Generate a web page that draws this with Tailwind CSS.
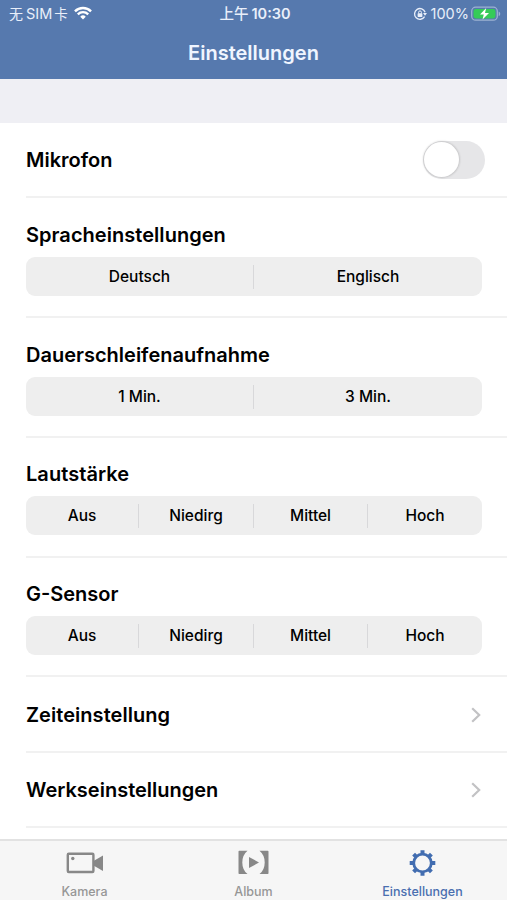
<!DOCTYPE html>
<html lang="de">
<head>
  <meta charset="UTF-8">
  <title>Einstellungen</title>
  <script src="https://cdn.jsdelivr.net/npm/@tailwindcss/browser@4"></script>
</head>
<body class="bg-white">
<div class="w-[507px] h-[900px] flex flex-col overflow-hidden bg-white text-black font-['Inter','Noto_Sans_CJK_SC',sans-serif]">

  <!-- Header -->
  <header class="h-[79px] shrink-0 bg-[#5679ae] text-white">
    <div class="h-7 grid grid-cols-3 items-center pl-[9px] pr-[6px] text-[15px] leading-7 text-[#e9effa]">
      <div class="flex items-center whitespace-nowrap">
        <span class="text-[14px]">无</span>
        <span class="ml-[3px] text-[14.5px]">SIM</span>
        <span class="ml-[2px] text-[13.5px]">卡</span>
        <svg class="ml-[6px] mb-[2px]" width="18" height="14" viewBox="0 0 19 14" fill="none" stroke="#fff" stroke-width="2.5">
          <path d="M1 5.2A12 12 0 0 1 18 5.2"/>
          <path d="M4 8.4A7.8 7.8 0 0 1 15 8.4"/>
          <path d="M9.5 13.8L6.6 10.9A4.1 4.1 0 0 1 12.4 10.9Z" fill="#fff" stroke="none"/>
        </svg>
      </div>
      <div class="text-center font-semibold text-[14.5px] whitespace-nowrap"><span class="font-medium">上午</span><span class="ml-[3px]">10:30</span></div>
      <div class="flex items-center justify-end whitespace-nowrap">
        <svg width="14" height="14" viewBox="0 0 14 14" fill="none" stroke="#e9effa" stroke-width="1.3">
          <path d="M11.6 9.7A5.4 5.4 0 1 1 12.1 5.2"/>
          <path d="M10 6h4l-2 2.8z" fill="#e9effa" stroke="none"/>
          <rect x="4.6" y="6.3" width="4.8" height="3.6" rx=".6" fill="#e9effa" stroke="none"/>
          <path d="M5.6 6.5V5.3a1.4 1.4 0 0 1 2.8 0v1.2" stroke-width="1"/>
        </svg>
        <span class="ml-[4px] text-[14.5px]">100%</span>
        <svg class="ml-[2px]" width="30" height="16" viewBox="0 0 30 16">
          <rect x=".7" y="1.2" width="25.6" height="13" rx="4" fill="none" stroke="#9db2d2" stroke-width="1.3"/>
          <rect x="2.5" y="3" width="22" height="9.4" rx="2.4" fill="#35cb58"/>
          <path d="M27.7 5.4v4.6c2-.8 2-3.8 0-4.6z" fill="#9db2d2"/>
          <path d="M15.2 2L9 8.5h3.8L11.5 13.5 18 7h-4z" fill="#fff"/>
        </svg>
      </div>
    </div>
    <h1 class="h-[49px] text-center text-[20px] leading-[50px] font-semibold text-[#f0f5ff]">Einstellungen</h1>
  </header>

  <div class="h-11 shrink-0 bg-[#efeff4]"></div>

  <!-- Settings list -->
  <main class="flex-1 min-h-0 overflow-hidden pl-[26px] text-[20px] font-semibold">
    <div class="h-[75px] border-b-2 border-[#f1f1f1] flex items-center justify-between pr-[22px]">
      <span>Mikrofon</span>
      <div class="w-[62px] h-[38px] rounded-full bg-[#e6e6e8] py-[1.5px] px-px">
        <div class="size-[35px] rounded-full bg-white shadow-[0_0_2px_1px_rgba(0,0,0,0.14)]"></div>
      </div>
    </div>

    <div class="h-[120px] border-b-2 border-[#f1f1f1] pt-[22px]">
      <h2 class="leading-[30px] tracking-[0.04px]">Spracheinstellungen</h2>
      <div class="mt-[7px] mr-[25px] h-[39px] rounded-[9px] bg-[#eeeeee] flex items-center text-[15.5px] leading-[23px] font-medium text-center">
        <div class="w-[227px]">Deutsch</div>
        <div class="w-px h-6 bg-[#d8d8da]"></div>
        <div class="flex-1">Englisch</div>
      </div>
    </div>

    <div class="h-[120px] border-b-2 border-[#f1f1f1] pt-[22px]">
      <h2 class="leading-[30px]">Dauerschleifenaufnahme</h2>
      <div class="mt-[7px] mr-[25px] h-[39px] rounded-[9px] bg-[#eeeeee] flex items-center text-[15.5px] leading-[23px] font-medium text-center">
        <div class="w-[227px]">1 Min.</div>
        <div class="w-px h-6 bg-[#d8d8da]"></div>
        <div class="flex-1">3 Min.</div>
      </div>
    </div>

    <div class="h-[119.5px] border-b-2 border-[#f1f1f1] pt-[21px]">
      <h2 class="leading-[30px] tracking-[0.05px]">Lautstärke</h2>
      <div class="mt-[7px] mr-[25px] h-[39px] rounded-[9px] bg-[#eeeeee] flex items-center text-[15.5px] leading-[23px] font-medium text-center">
        <div class="w-[112px]">Aus</div>
        <div class="w-px h-6 bg-[#d8d8da]"></div>
        <div class="w-[114px]">Niedirg</div>
        <div class="w-px h-6 bg-[#d8d8da]"></div>
        <div class="w-[113px]">Mittel</div>
        <div class="w-px h-6 bg-[#d8d8da]"></div>
        <div class="flex-1">Hoch</div>
      </div>
    </div>

    <div class="h-[119.5px] border-b-2 border-[#f1f1f1] pt-[21.5px]">
      <h2 class="leading-[30px]">G-Sensor</h2>
      <div class="mt-[7px] mr-[25px] h-[39px] rounded-[9px] bg-[#eeeeee] flex items-center text-[15.5px] leading-[23px] font-medium text-center">
        <div class="w-[112px]">Aus</div>
        <div class="w-px h-6 bg-[#d8d8da]"></div>
        <div class="w-[114px]">Niedirg</div>
        <div class="w-px h-6 bg-[#d8d8da]"></div>
        <div class="w-[113px]">Mittel</div>
        <div class="w-px h-6 bg-[#d8d8da]"></div>
        <div class="flex-1">Hoch</div>
      </div>
    </div>

    <div class="h-[75.5px] border-b-2 border-[#f1f1f1] flex items-center justify-between pt-[2px] pr-[26px]">
      <span class="tracking-[0.05px]">Zeiteinstellung</span>
      <svg width="10" height="16" viewBox="0 0 10 16" fill="none" stroke="#c2c2c4" stroke-width="2.2"><path d="M1.2 1.2L8.2 8l-7 6.8"/></svg>
    </div>

    <div class="h-[75.5px] border-b-2 border-[#f1f1f1] flex items-center justify-between pt-[2px] pr-[26px]">
      <span>Werkseinstellungen</span>
      <svg width="10" height="16" viewBox="0 0 10 16" fill="none" stroke="#c2c2c4" stroke-width="2.2"><path d="M1.2 1.2L8.2 8l-7 6.8"/></svg>
    </div>
  </main>

  <!-- Tab bar -->
  <nav class="h-[61px] shrink-0 border-t-2 border-[#e2e2e2] bg-[#f6f6f6] grid grid-cols-3 text-[12.5px] leading-[18px] font-medium text-[#969696]">
    <div class="flex flex-col items-center pt-[7px]">
      <svg width="38" height="30" viewBox="0.5 -0.5 38 30">
        <rect x="2.3" y="5.3" width="25.6" height="18.2" rx="1" fill="none" stroke="#888" stroke-width="2.4"/>
        <circle cx="7.3" cy="10" r="1.7" fill="#888"/>
        <path d="M28 12.5L37.5 7v15.5L28 17z" fill="#888"/>
      </svg>
      <span class="mt-[5px]">Kamera</span>
    </div>
    <div class="flex flex-col items-center pt-[7px]">
      <svg width="32" height="30" viewBox="0.5 0 32 30" fill="#888">
        <path d="M1 3.5q0-.8.8-.8H10Q4.8 7 4.8 14.4T10 26H1.8q-.8 0-.8-.8z"/>
        <path d="M31 3.5q0-.8-.8-.8H22Q27.2 7 27.2 14.4T22 26h8.2q.8 0 .8-.8z"/>
        <path d="M11.5 9v11l10-5.5z"/>
      </svg>
      <span class="mt-[5px]">Album</span>
    </div>
    <div class="flex flex-col items-center pt-[7px] text-[#4a6fb0]">
      <svg width="30" height="30" viewBox="-14.5 -15 30 30" fill="none" stroke="#426db0">
        <circle r="8.8" stroke-width="2.8"/>
        <path stroke-width="4" d="M0-9V-12.8M0 9V12.8M-9 0H-12.8M9 0H12.8M6.4-6.4L8.9-8.9M-6.4-6.4L-8.9-8.9M6.4 6.4L8.9 8.9M-6.4 6.4L-8.9 8.9"/>
      </svg>
      <span class="mt-[5px]">Einstellungen</span>
    </div>
  </nav>
</div>
</body>
</html>
